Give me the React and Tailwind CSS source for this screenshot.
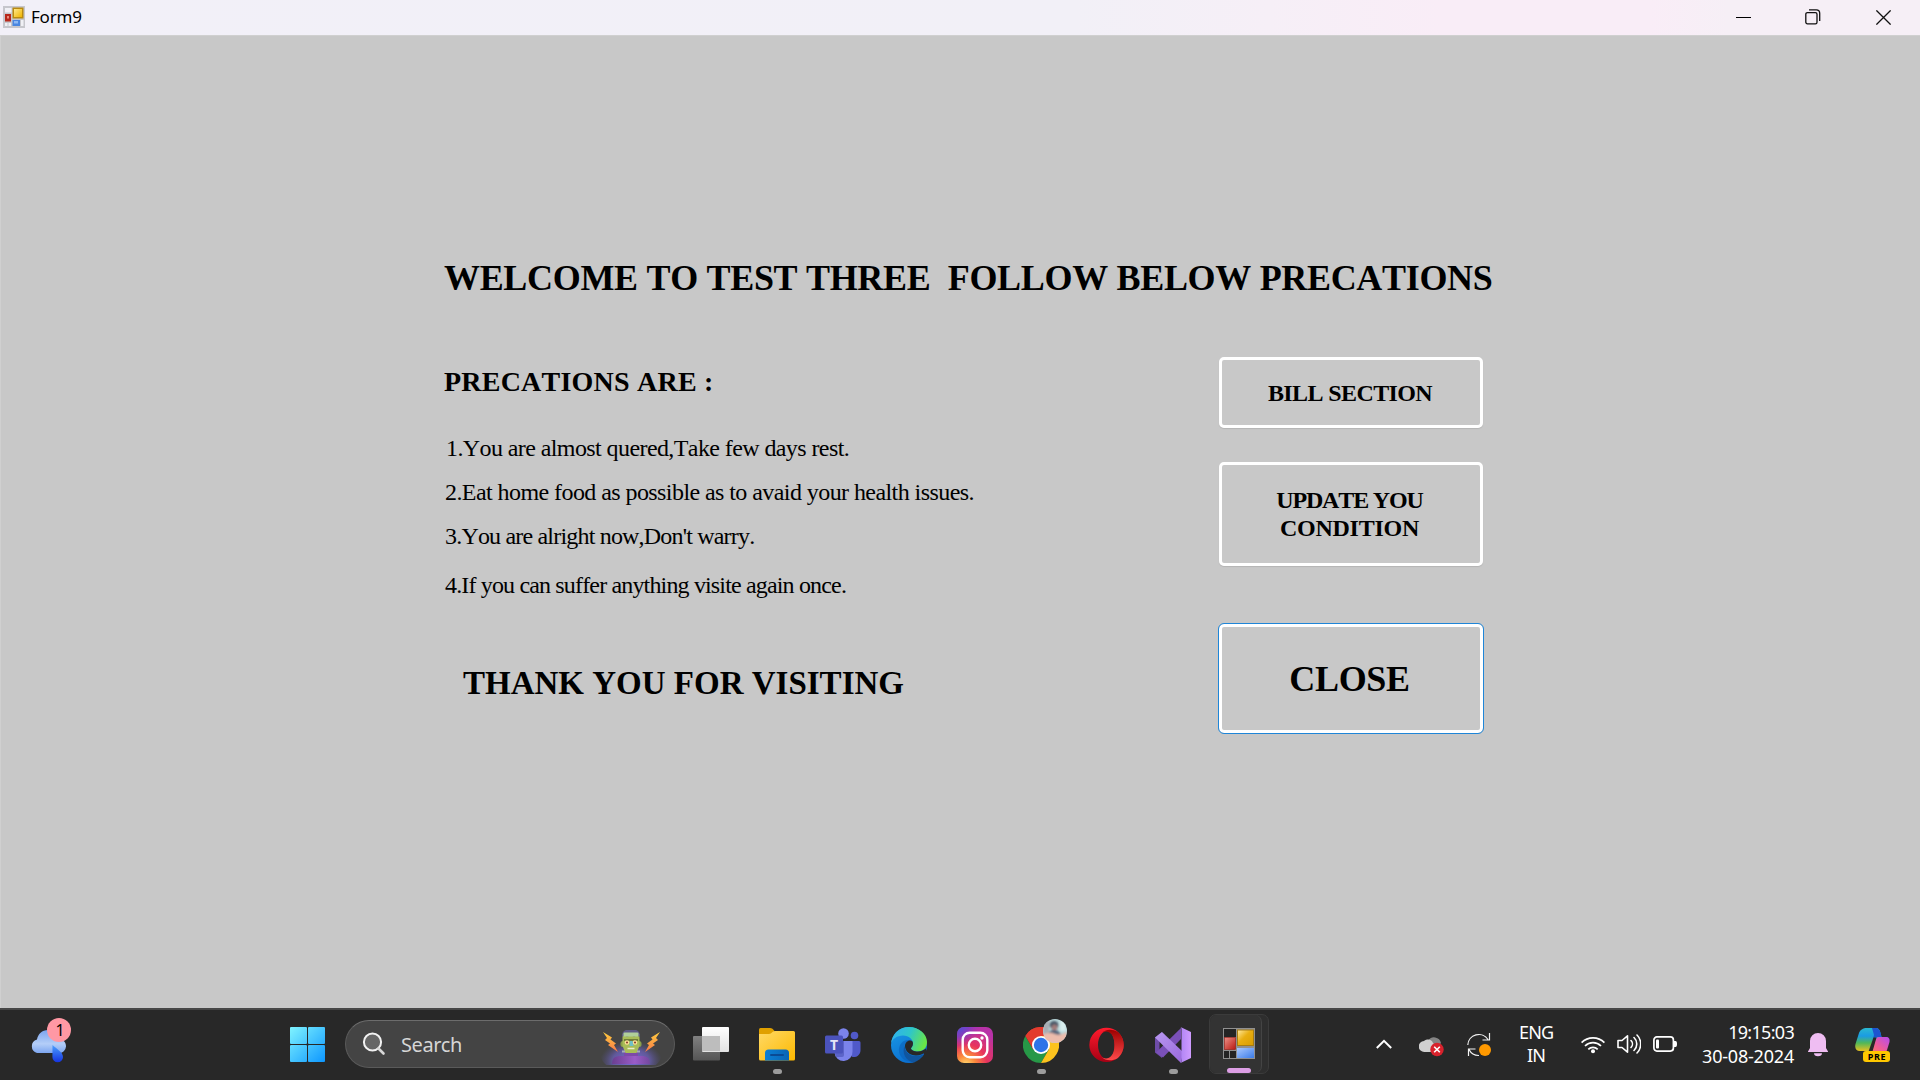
import React from "react";

const serif = "font-['Liberation_Serif',serif] [font-kerning:none] text-black whitespace-pre";
const sans = "font-['Noto_Sans',sans-serif] whitespace-pre";

function FormIcon() {
  return (
    <svg width="22" height="22" viewBox="0 0 22 22" className="block">
      <defs>
        <linearGradient id="fy" x1="0" y1="0" x2="1" y2="1">
          <stop offset="0" stopColor="#ffe88a" />
          <stop offset="1" stopColor="#f0b400" />
        </linearGradient>
      </defs>
      <rect width="22" height="22" fill="#c6c6cc" />
      <rect x="2" y="2" width="6.5" height="4.5" fill="#f0f0f5" />
      <rect x="2" y="8" width="6" height="7.5" fill="#b8281c" />
      <rect x="4" y="10" width="2" height="2.5" fill="#e88a7c" />
      <rect x="9.5" y="1.5" width="11" height="11" fill="#b98a10" />
      <rect x="11" y="3" width="8" height="8" fill="url(#fy)" />
      <rect x="9.5" y="14" width="7.5" height="6" fill="#4a86e0" />
      <rect x="11" y="15" width="4" height="2.5" fill="#8db8f4" />
      <rect x="2" y="17" width="2.5" height="3" fill="#f0f0f5" />
      <rect x="5.5" y="17" width="2.5" height="3" fill="#f0f0f5" />
      <rect x="18" y="14" width="2.5" height="6" fill="#f0f0f5" />
    </svg>
  );
}

function TitleBar() {
  return (
    <header className="flex h-[35px] shrink-0 items-center bg-[linear-gradient(90deg,#f2f0f8_0%,#f2f0f7_56%,#f6eff7_66%,#f9edf7_75%,#f9edf7_86%,#f6eff6_90%)] pb-px pl-[3px] pr-[29px]">
      <FormIcon />
      <span className={`${sans} ml-[6px] text-[17px] leading-[24px] tracking-[-0.2px] text-black`}>Form9</span>
      <div className="ml-auto flex items-center">
        <svg width="15" height="15" viewBox="0 0 15 15" className="mr-[54px] block"><rect y="7" width="15" height="1" fill="#000" /></svg>
        <svg width="16" height="16" viewBox="0 0 16 16" className="mr-[55px] block" fill="none" stroke="#111" strokeWidth="1.3">
          <rect x="0.8" y="3.6" width="11.2" height="11.2" rx="1.6" />
          <path d="M4 .8h7.3a3.4 3.4 0 0 1 3.4 3.4V12" />
        </svg>
        <svg width="15" height="15" viewBox="0 0 15 15" className="block" stroke="#111" strokeWidth="1.3"><path d="M.4.4l14.2 14.2M14.6.4.4 14.6" /></svg>
      </div>
    </header>
  );
}

function Form() {
  return (
    <main className="h-[973px] shrink-0 border-l border-t border-[#d0d0d0] bg-[#c8c8c8] pl-[443px] pt-[221px]">
      <h1 className={`${serif} text-[36px] font-bold leading-[42px] tracking-[-0.32px]`}>WELCOME TO TEST THREE  FOLLOW BELOW PRECATIONS</h1>
      <div className="flex">
        <section className="w-[774px] pt-[67px]">
          <h2 className={`${serif} text-[28px] font-bold leading-[32px] tracking-[0.22px]`}>PRECATIONS ARE :</h2>
          <div className={`${serif} pl-px pt-[36px] text-[24px] leading-[28px]`}>
            <p className="pl-px tracking-[-0.59px]">1.You are almost quered,Take few days rest.</p>
            <p className="mt-[16px] tracking-[-0.57px]">2.Eat home food as possible as to avaid your health issues.</p>
            <p className="mt-[16px] tracking-[-0.81px]">3.You are alright now,Don't warry.</p>
            <p className="mt-[21px] tracking-[-0.84px]">4.If you can suffer anything visite again once.</p>
          </div>
          <p className={`${serif} pl-[19px] pt-[65px] text-[33px] font-bold leading-[38px]`}>THANK YOU FOR VISITING</p>
        </section>
        <section className={`${serif} flex w-[266px] flex-col pt-[58px] text-center font-bold`}>
          <button className="mx-px h-[71px] rounded-[5px] border-[3px] border-white pr-[2px] text-[24px] leading-[28px] tracking-[-0.6px] shadow-[0_1px_1px_#b4b4b4]">BILL SECTION</button>
          <button className="mx-px mt-[34px] h-[104px] rounded-[5px] border-[3px] border-white pr-[3px] text-[24px] leading-[28px] shadow-[0_1px_1px_#b4b4b4]">
            <span className="block tracking-[-1.15px]">UPDATE YOU</span>
            <span className="block tracking-[-0.25px]">CONDITION</span>
          </button>
          <button className="mt-[57px] h-[111px] rounded-[6px] border border-[#1f86d8] pr-[3px] text-[36px] leading-[42px] tracking-[-0.3px] shadow-[inset_0_0_0_3px_#fff]">CLOSE</button>
        </section>
      </div>
    </main>
  );
}

function Weather() {
  return (
    <div className="relative mb-[10px] ml-[30px] h-[44px] w-[42px]">
      <svg width="42" height="46" viewBox="0 0 42 46" className="block">
        <defs>
          <linearGradient id="wc" x1="0" y1="0" x2="0" y2="1"><stop offset="0" stopColor="#7aa4ee" /><stop offset=".6" stopColor="#b4cef8" /><stop offset="1" stopColor="#7da6f0" /></linearGradient>
          <linearGradient id="wd" x1="0" y1="0" x2="0" y2="1"><stop offset="0" stopColor="#4ba0ff" /><stop offset="1" stopColor="#1533e0" /></linearGradient>
        </defs>
        <path d="M7 35a7 7 0 0 1 0-13.5C8 16 12 12 18 12c6 0 10 4 12 9 4 1 6 4 6 7.500a7 7 0 0 1-7 6.500z" fill="url(#wc)" />
        <path d="M22.500 27c4 4 10.500 7 10.500 12a5.300 5.300 0 0 1-10.600 0z" fill="url(#wd)" />
      </svg>
      <div className={`${sans} absolute left-[17px] top-0 flex h-[24px] w-[24px] items-center justify-center rounded-full bg-[#ff98a4] pb-px pl-[2px] text-[16px] leading-none text-black`}>1</div>
    </div>
  );
}

function WindowsLogo() {
  return (
    <svg width="36" height="36" viewBox="0 0 36 36" className="block">
      <defs><linearGradient id="win" gradientUnits="userSpaceOnUse" x1="0" y1="0" x2="36" y2="36"><stop offset="0" stopColor="#80f4ff" /><stop offset="1" stopColor="#0a94ff" /></linearGradient></defs>
      <g fill="url(#win)"><rect x="0" y="0" width="17" height="17" rx="1" /><rect x="18" y="0" width="17" height="17" rx="1" /><rect x="0" y="18" width="17" height="17" rx="1" /><rect x="18" y="18" width="17" height="17" rx="1" /></g>
    </svg>
  );
}

function Monster() {
  return (
    <svg width="64" height="36" viewBox="0 0 64 36" className="block">
      <defs>
        <radialGradient id="mg" cx=".5" cy=".7" r=".5"><stop offset="0" stopColor="#7a6ee0" /><stop offset=".6" stopColor="#6a60b8" stopOpacity=".75" /><stop offset="1" stopColor="#555090" stopOpacity="0" /></radialGradient>
        <linearGradient id="mb" x1="0" y1="0" x2="0" y2="1"><stop offset="0" stopColor="#ffce3e" /><stop offset="1" stopColor="#f87848" /></linearGradient>
        <linearGradient id="mp" x1="0" y1="0" x2="1" y2="0"><stop offset="0" stopColor="#6b3f90" /><stop offset=".6" stopColor="#9a5cc8" /><stop offset="1" stopColor="#74489e" /></linearGradient>
      </defs>
      <ellipse cx="31" cy="24" rx="31" ry="20" fill="url(#mg)" />
      <path d="M12 35c0-6 3-8 9-8h20c6 0 9 2 9 8z" fill="url(#mp)" />
      <path d="M24 20h14v7H24z" fill="#7d4aa8" />
      <rect x="20.500" y="12" width="21" height="6" rx="2.500" fill="#8aa04a" />
      <path d="M22.500 5h17v12l-3 7h-11l-3-7z" fill="#a8bc58" />
      <path d="M22 8c0-5 2-7 5-7h8c3 0 5 2 5 7l-3-1.500-3 1-3-1-4 1-3-1z" fill="#5d5886" />
      <rect x="23.500" y="3.500" width="15" height="4" rx="1" fill="#b0ce9a" />
      <rect x="24" y="10" width="14" height="2" fill="#6f7b38" />
      <circle cx="27" cy="13.500" r="2.300" fill="#ffe29a" /><circle cx="35" cy="13.500" r="2.300" fill="#ffe29a" />
      <circle cx="27" cy="13.500" r="1.100" fill="#8b4530" /><circle cx="35" cy="13.500" r="1.100" fill="#8b4530" />
      <path d="M30 12h2.500l1 5h-4z" fill="#6fc0c8" />
      <path d="M27.500 19.500h7" stroke="#eef0c8" strokeWidth="1.500" />
      <path d="M22 22.500h3M37 22.500h3" stroke="#a7a9b8" strokeWidth="2" />
      <path d="M3 3l9 5.500-1.500 2 5.500 4-2 1.500 4 7-10-7 2-1.500-5-3.500 2-2z" fill="url(#mb)" />
      <path d="M60 3l-9 5.500 1.500 2-5.500 4 2 1.500-4 7 10-7-2-1.500 5-3.500-2-2z" fill="url(#mb)" />
    </svg>
  );
}

function Search() {
  return (
    <div className="flex h-[48px] w-[330px] items-center rounded-full border border-[#5a5a5a] border-t-[#6c6c6c] bg-[#444] pl-[16px] pr-[10px]">
      <svg width="24" height="24" viewBox="0 0 24 24" fill="none" className="block">
        <circle cx="10.500" cy="10" r="8.600" fill="#666" stroke="#f2f2f2" strokeWidth="2" />
        <path d="M16.500 16.500l5 5" stroke="#d8d8d8" strokeWidth="2.600" strokeLinecap="round" />
      </svg>
      <span className={`${sans} ml-[15px] pt-px text-[20px] leading-[28px] tracking-[-0.4px] text-[#d6d6d6]`}>Search</span>
      <div className="ml-auto self-end pb-[2px]"><Monster /></div>
    </div>
  );
}

function TaskView() {
  return (
    <svg width="36" height="36" viewBox="0 0 36 36" className="block">
      <defs>
        <linearGradient id="ta" x1="0" y1="0" x2="0" y2="1"><stop offset="0" stopColor="#fff" /><stop offset="1" stopColor="#e2e2e2" /></linearGradient>
        <linearGradient id="tb" x1="0" y1="0" x2="0" y2="1"><stop offset="0" stopColor="#808080" /><stop offset="1" stopColor="#555" /></linearGradient>
      </defs>
      <rect x="0" y="9" width="27" height="24.500" rx="1" fill="url(#tb)" />
      <rect x="9" y="0" width="27" height="25" rx="1" fill="url(#ta)" />
      <rect x="9" y="9" width="18" height="15" fill="#bdbdbd" />
    </svg>
  );
}

function Explorer() {
  return (
    <svg width="36" height="36" viewBox="0 0 36 36" className="block">
      <defs>
        <linearGradient id="ea" x1="0" y1="0" x2="1" y2="1"><stop offset="0" stopColor="#ffd966" /><stop offset="1" stopColor="#fdb900" /></linearGradient>
        <linearGradient id="eb" x1="0" y1="0" x2="1" y2="0"><stop offset="0" stopColor="#0b80d6" /><stop offset="1" stopColor="#0a64b4" /></linearGradient>
      </defs>
      <path d="M0 2.500Q0 1 1.500 1H11c2 0 3 1 4.500 3v6H0z" fill="#e0a000" />
      <path d="M0 7h10c3 0 3-3 6-3h18.500Q36 4 36 5.500V32q0 1.500-1.500 1.500h-33Q0 33.500 0 32z" fill="url(#ea)" />
      <path d="M6 33.500V26q0-3.500 3.500-3.500h17Q30 22.500 30 26v7.500z" fill="url(#eb)" />
      <rect x="11" y="27" width="14" height="2" rx="1" fill="#0a4a94" />
    </svg>
  );
}

function Teams() {
  return (
    <svg width="36" height="36" viewBox="0 0 36 36" className="block">
      <circle cx="18.500" cy="6.500" r="5.300" fill="#7b83eb" /><circle cx="29.500" cy="8.500" r="3.800" fill="#5059c9" />
      <path d="M25 14h9a1.500 1.500 0 0 1 1.500 1.500v8a6.500 6.500 0 0 1-9 6z" fill="#5059c9" />
      <path d="M10 14h17.500V24.500a9 9 0 0 1-18 1z" fill="#7b83eb" />
      <path d="M16 14h3v14q0 2-2 2h-6l-1-3z" fill="#5c64c8" />
      <rect x="0" y="8.500" width="18" height="18" rx="1.500" fill="#4b53bc" />
      <text x="9" y="22.500" textAnchor="middle" fontFamily="Noto Sans" fontWeight="700" fontSize="14" fill="#e4e4f6">T</text>
    </svg>
  );
}

function Edge() {
  return (
    <svg width="36" height="36" viewBox="0 0 36 36" className="block">
      <defs>
        <linearGradient id="g1" x1="0" y1=".2" x2="1" y2=".5"><stop offset="0" stopColor="#30b0f0" /><stop offset=".5" stopColor="#2fc6c8" /><stop offset="1" stopColor="#6ae645" /></linearGradient>
        <linearGradient id="g2" x1="0" y1="0" x2=".5" y2="1"><stop offset="0" stopColor="#1a9be6" /><stop offset="1" stopColor="#0b6fd0" /></linearGradient>
      </defs>
      <circle cx="18" cy="18" r="18" fill="url(#g2)" />
      <path d="M0 17C1 7 8 0 18 0c10 0 18 7 18 15 0 6-4 9.500-9 9.500-4 0-7-1.500-7-3 0-1 2-2 2-5 0-4-4-8-10-8C6 8.500 1 12 0 17z" fill="url(#g1)" />
      <path d="M14 17c-3 7 2 15 10 17-9 3-17-4-16-12 .5-5 4-9 9-9 3 0 4.500 1.500 5 3.500-4-3-7-1.500-8 .5z" fill="#0a5db6" opacity=".55" />
      <path d="M22 16.500c0 3-2 4-2 5 0 1.500 3 3 7 3 3 0 5-1 8-3v14H22l8-5c2-1.300 3.500-3.500 3-4-.4-.5-3 2-8 2-6 0-11-4-11-9.500 0-3.500 3-6 5.500-5.500 1.500.3 2.500 1 2.500 3z" fill="#282828" />
      <path d="M14 18c-1 6 4 11 11 11 5 0 8-2.500 8-2C31 31 27 34 23 35.500 15 34 10 26 14 18z" fill="#10559f" />
    </svg>
  );
}

function Instagram() {
  return (
    <svg width="36" height="36" viewBox="0 0 36 36" className="block">
      <defs>
        <radialGradient id="ia" gradientUnits="userSpaceOnUse" cx="9" cy="38" r="38"><stop offset="0" stopColor="#ffdc70" /><stop offset=".25" stopColor="#fb8a3c" /><stop offset=".55" stopColor="#e8345c" /><stop offset="1" stopColor="#b832a8" /></radialGradient>
        <radialGradient id="ib" gradientUnits="userSpaceOnUse" cx="0" cy="-2" r="24"><stop offset="0" stopColor="#3a5ae0" /><stop offset=".5" stopColor="#6a40d0" stopOpacity=".7" /><stop offset="1" stopColor="#a030c0" stopOpacity="0" /></radialGradient>
      </defs>
      <rect width="36" height="36" rx="7" fill="url(#ia)" /><rect width="36" height="36" rx="7" fill="url(#ib)" />
      <g fill="none" stroke="#fff" strokeWidth="2.400"><rect x="5.700" y="5.700" width="24.600" height="24.600" rx="7" /><circle cx="18" cy="18" r="6.200" /></g>
      <circle cx="25" cy="11" r="1.700" fill="#fff" />
    </svg>
  );
}

function Chrome() {
  return (
    <div className="relative h-[36px] w-[36px]">
      <svg width="36" height="36" viewBox="0 0 36 36" className="block">
        <path d="M18 18 2.400 9A18 18 0 0 1 33.600 9z" fill="#e33b2e" />
        <path d="M2.400 9A18 18 0 0 0 18 36L25.800 22.500 18 18 10.200 22.500z" fill="#279847" />
        <path d="M18 9h15.600a18 18 0 0 1-15.600 27l7.800-13.500z" fill="#fcc31e" />
        <path d="M2.400 9A18 18 0 0 1 33.600 9H18l-7.800 13.500z" fill="#e33b2e" />
        <circle cx="18" cy="18" r="9" fill="#fff" /><circle cx="18" cy="18" r="7.200" fill="#2d74e8" />
      </svg>
      <svg width="24" height="24" viewBox="0 0 24 24" className="absolute left-[20px] top-[-8px] block">
        <defs>
          <clipPath id="av"><circle cx="12" cy="12" r="12" /></clipPath>
          <filter id="soft"><feGaussianBlur stdDeviation=".9" /></filter>
        </defs>
        <g clipPath="url(#av)">
          <rect width="24" height="24" fill="#b9d7da" />
          <g filter="url(#soft)">
            <rect x="0" y="0" width="6" height="15" fill="#a8adb4" /><rect x="17" y="2" width="6" height="10" fill="#d9eeee" />
            <ellipse cx="11" cy="6" rx="4.500" ry="4" fill="#4a5868" /><ellipse cx="11.500" cy="8.500" rx="2.800" ry="3" fill="#a27a78" />
            <path d="M5 16q1-5 6-5t7 5z" fill="#52647a" /><path d="M0 16q6-4 12-1 5 2 12-2v12H0z" fill="#ecbcac" />
          </g>
        </g>
      </svg>
    </div>
  );
}

function Opera() {
  return (
    <svg width="36" height="36" viewBox="0 0 36 36" className="block">
      <defs>
        <linearGradient id="oa" x1="0" y1="0" x2="0" y2="1"><stop offset="0" stopColor="#ff1b2d" /><stop offset="1" stopColor="#a70014" /></linearGradient>
        <linearGradient id="ob" x1="0" y1="0" x2="0" y2="1"><stop offset="0" stopColor="#9c0000" /><stop offset="1" stopColor="#ff4b4b" /></linearGradient>
      </defs>
      <path fillRule="evenodd" d="M17.500.700a17.200 17.200 0 1 0 0 34.400 17.200 17.200 0 0 0 0-34.400zM18 4c4.500 0 7.500 6 7.500 14S22.500 32 18 32 9 26 9 18 13.500 4 18 4z" fill="url(#oa)" />
      <path d="M12.500 6.200C16 2 23 1.500 28.500 4.800 32.500 8 34.700 13 34.700 18s-2.200 10-6.200 13.200C23 34.500 16 34 12.500 29.800c4.500 3.700 13 1.500 13-11.800s-8.500-15.500-13-11.800z" fill="url(#ob)" />
    </svg>
  );
}

function VisualStudio() {
  return (
    <svg width="36" height="36" viewBox="0 0 36 36" className="block">
      <defs>
        <linearGradient id="va" x1="0" y1="0" x2="1" y2="0"><stop offset="0" stopColor="#b084f4" /><stop offset="1" stopColor="#cf9cff" /></linearGradient>
        <linearGradient id="vb" x1="0" y1="0" x2="1" y2="1"><stop offset="0" stopColor="#b898f0" /><stop offset="1" stopColor="#9a68dc" /></linearGradient>
      </defs>
      <path d="M0 10.500 7 5v6L4.500 13v10L7 25v6L0 25.500z" fill="#6e4ca8" />
      <path d="M1 25.500 26 1v11L8 30.500z" fill="#7a50b8" />
      <path d="M0 10.500 7 5 28 25l-2 11z" fill="url(#vb)" />
      <path d="M25.500 0 36 5v26l-10.500 5q1-.5 1-2V2q0-1.500-1-2z" fill="url(#va)" />
    </svg>
  );
}

function AppIcon() {
  return (
    <svg width="32" height="32" viewBox="0 0 32 32" className="block">
      <defs>
        <linearGradient id="ay" x1="0" y1="0" x2="1" y2="1"><stop offset="0" stopColor="#ffe9a0" /><stop offset=".45" stopColor="#e9ae10" /><stop offset="1" stopColor="#d89c00" /></linearGradient>
        <linearGradient id="ar" x1="0" y1="0" x2="1" y2="1"><stop offset="0" stopColor="#ee9088" /><stop offset="1" stopColor="#b81810" /></linearGradient>
        <linearGradient id="ab" x1="0" y1="0" x2="1" y2="1"><stop offset="0" stopColor="#a8c8ff" /><stop offset="1" stopColor="#3c7ce8" /></linearGradient>
      </defs>
      <rect x="0" y="0" width="32" height="31" fill="#909090" />
      <rect x="1" y="1" width="12" height="8" fill="#242424" />
      <rect x="1" y="23" width="5" height="7" fill="#242424" /><rect x="7" y="23" width="6" height="7" fill="#242424" />
      <rect x="14.500" y="2" width="16" height="15.500" fill="url(#ay)" stroke="#a87c10" />
      <rect x="1.500" y="9.500" width="11" height="12" fill="url(#ar)" stroke="#981810" strokeWidth=".6" />
      <rect x="14" y="20" width="17" height="10" fill="url(#ab)" />
    </svg>
  );
}

function Slot({ children, running }) {
  return (
    <div className="relative flex h-[36px] w-[36px] items-center justify-center">
      {children}
      {running && <div className="absolute left-[14px] top-[42px] h-[5px] w-[9px] rounded-full bg-[#9c9c9c]" />}
    </div>
  );
}

function Tray() {
  return (
    <div className="mb-[2px] ml-auto flex items-center pr-[30px]">
      <svg width="16" height="10" viewBox="0 0 16 10" className="block" fill="none" stroke="#fff" strokeWidth="2"><path d="M.8 9 8 1.800 15.200 9" /></svg>
      <svg width="26" height="22" viewBox="0 0 26 22" className="ml-[27px] mt-[4px] block">
        <path d="M9 6a7 7 0 0 1 13 2l-6 8z" fill="#858585" />
        <path d="M5.500 17a5.500 5.500 0 0 1-.5-11c4-3 8-1 9 2l3 3-3 6z" fill="#d0d0d0" />
        <circle cx="18" cy="14.500" r="6.700" fill="#d8222c" />
        <path d="M15.200 11.700l5.600 5.600M20.800 11.700l-5.600 5.600" stroke="#fff" strokeWidth="1.600" />
      </svg>
      <svg width="26" height="26" viewBox="0 0 26 26" className="ml-[21px] block" fill="none" stroke="#f4f4f4" strokeWidth="1.200">
        <path d="M1.800 14A11 11 0 0 1 22 8.500M23.500 2v7h-7M13 24.500A11 11 0 0 1 3 18.500M2.500 25v-7h7" />
        <circle cx="19" cy="19" r="6" fill="#ff9900" stroke="none" />
      </svg>
      <div className={`${sans} ml-[27px] w-[34px] text-center text-[18px] leading-[23px] tracking-[-0.8px] text-white`}>{"ENG\nIN"}</div>
      <svg width="24" height="19" viewBox="0 0 24 19" className="ml-[28px] block" fill="none" stroke="#fff" strokeWidth="1.700">
        <path d="M.6 7.600a16 16 0 0 1 22.800 0M4 11a11.400 11.400 0 0 1 16 0M7.300 14.300a6.700 6.700 0 0 1 9.400 0" />
        <circle cx="12" cy="16.200" r="2" fill="#fff" stroke="none" />
      </svg>
      <svg width="24" height="22" viewBox="0 0 24 22" className="ml-[12px] block" fill="none" stroke="#fff" strokeWidth="1.600" strokeLinejoin="round" strokeLinecap="round">
        <path d="M1 7.500h4l5.500-4.700v16.400L5 14.500H1zM14 7.500a5 5 0 0 1 0 7M17 4.500a9 9 0 0 1 0 13M20 2a12.800 12.800 0 0 1 0 18" />
      </svg>
      <svg width="24" height="16" viewBox="0 0 24 16" className="ml-[12px] block">
        <rect x=".9" y=".9" width="19.500" height="14.200" rx="3" fill="none" stroke="#fff" strokeWidth="1.700" />
        <rect x="3" y="3.500" width="3" height="9" rx="1" fill="#fff" /><path d="M21 5h1.500q1.500 0 1.500 3t-1.500 3H21z" fill="#fff" />
      </svg>
      <div className={`${sans} ml-[25px] text-right text-[18px] leading-[24px] text-white`}>
        <div className="tracking-[-0.7px]">19:15:03</div>
        <div className="tracking-[-0.2px]">30-08-2024</div>
      </div>
      <svg width="20" height="24" viewBox="0 0 20 24" className="ml-[14px] mt-px block" fill="#efbdf2">
        <path d="M10 0a8 8 0 0 1 8 8v7l2 3.500v.5H0v-.5L2 15V8a8 8 0 0 1 8-8zM6 20.300h8a4 3 0 0 1-8 0z" />
      </svg>
      <div className="relative ml-[27px] mt-[2px] h-[36px] w-[35px]">
        <svg width="35" height="36" viewBox="0 0 35 36" className="block">
          <defs>
            <linearGradient id="ca" x1="0" y1="0" x2="0" y2="1"><stop offset="0" stopColor="#2ab8d0" /><stop offset=".35" stopColor="#1a9be4" /><stop offset=".65" stopColor="#50b858" /><stop offset="1" stopColor="#e8c020" /></linearGradient>
            <linearGradient id="cb" x1="1" y1="0" x2="0" y2="1"><stop offset="0" stopColor="#b44cf0" /><stop offset=".5" stopColor="#ee5c98" /><stop offset="1" stopColor="#ff8a50" /></linearGradient>
          </defs>
          <path d="M12 1h9c2.500 0 4 2 4.500 5l1 4h4l-7 4-6 10H5c-4 0-5.500-3-4.500-7L4 6c1-3 4-5 8-5z" fill="url(#ca)" />
          <path d="M17 1h4c2.500 0 4 2 4.500 5l1 4h-3c-3 0-5 1-6 3.500L19 8z" fill="#1d54d0" />
          <path d="M24 10h7c3 0 4 2 3.500 5L32 23c-1 3-3 5-7 5H11c4 0 5.500-2 6.500-5l2.500-9c1-2.500 2-4 4-4z" fill="url(#cb)" />
          <path d="M18.500 10.500h3l-4 14h-4z" fill="#282828" />
        </svg>
        <div className={`${sans} absolute left-[8px] top-[24px] flex h-[11px] w-[27px] items-center justify-center rounded-[3px] bg-[#ffc800] pl-px text-[9px] font-bold leading-none tracking-[0.7px] text-black`}>PRE</div>
      </div>
    </div>
  );
}

function Taskbar() {
  return (
    <footer className="flex h-[72px] shrink-0 items-center border-t-2 border-[#474747] bg-[#282828]">
      <Weather />
      <div className="ml-[218px]"><WindowsLogo /></div>
      <div className="mb-[2px] ml-[19px]"><Search /></div>
      <nav className="ml-[18px] flex items-center gap-[30px]">
        <Slot><TaskView /></Slot>
        <Slot running><Explorer /></Slot>
        <Slot><Teams /></Slot>
        <Slot><Edge /></Slot>
        <Slot><Instagram /></Slot>
        <Slot running><Chrome /></Slot>
        <Slot><Opera /></Slot>
        <Slot running><VisualStudio /></Slot>
      </nav>
      <div className="mb-[2px] ml-[18px] flex h-[60px] w-[60px] rounded-[7px] border border-[#3b3b3b] bg-[#2e2e2e]">
        <div className="relative flex h-[58px] w-[52px] items-center justify-center rounded-[7px] border-r border-[#444] bg-[#333] pl-[6px]">
          <AppIcon />
          <div className="absolute left-[17px] top-[53px] h-[5px] w-[24px] rounded-full bg-[#dc9ee4]" />
        </div>
      </div>
      <Tray />
    </footer>
  );
}

export default function App() {
  return (
    <div className="flex h-[1080px] w-[1920px] flex-col overflow-hidden bg-[#c8c8c8]">
      <TitleBar />
      <Form />
      <Taskbar />
    </div>
  );
}
